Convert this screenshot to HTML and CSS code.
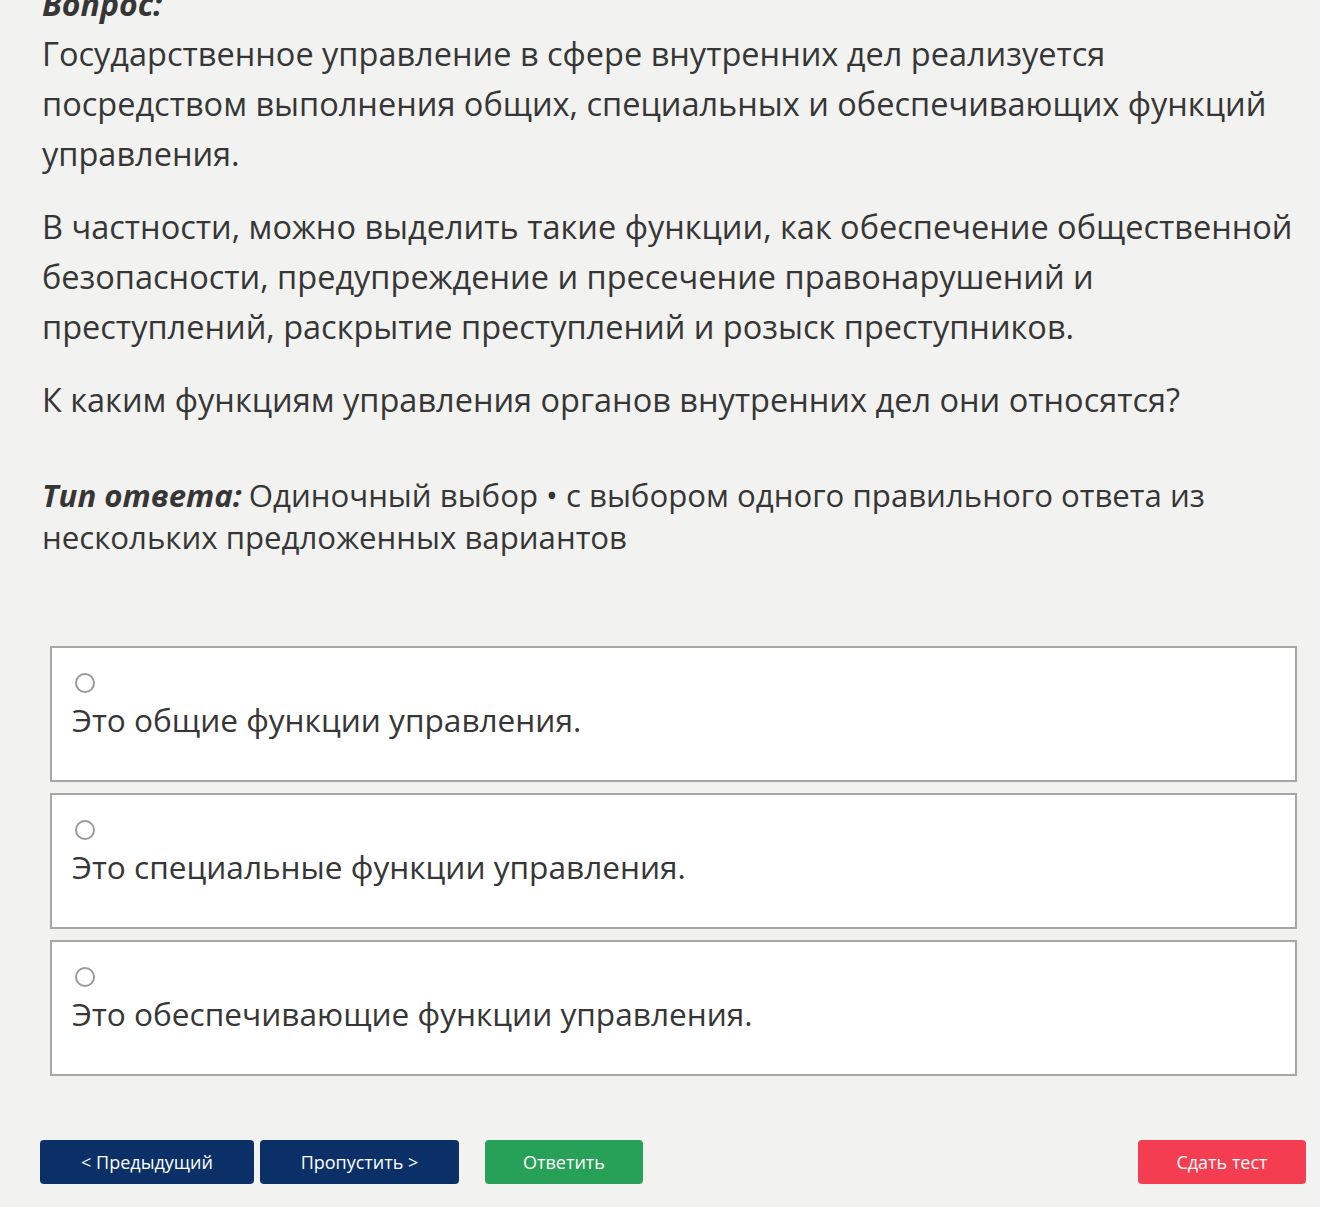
FILE: index.html
```html
<!DOCTYPE html>
<html lang="ru">
<head>
    <meta charset="UTF-8">
    <meta name="viewport" content="width=device-width, initial-scale=1.0">
    <title>Тестирование</title>
    <link rel="stylesheet" href="styles.css">
</head>
<body>
    <main class="test-page">
        <section class="question">
            <div class="question-label">Вопрос:</div>
            <p>Государственное управление в сфере внутренних дел реализуется посредством выполнения общих, специальных и обеспечивающих функций управления.</p>
            <p>В частности, можно выделить такие функции, как обеспечение общественной безопасности, предупреждение и пресечение правонарушений и преступлений, раскрытие преступлений и розыск преступников.</p>
            <p>К каким функциям управления органов внутренних дел они относятся?</p>
        </section>

        <div class="answer-type">
            <b>Тип ответа:</b><span>Одиночный выбор • с выбором одного правильного ответа из нескольких предложенных вариантов</span>
        </div>

        <form class="options">
            <label class="option">
                <input type="radio" name="answer">
                <span>Это общие функции управления.</span>
            </label>
            <label class="option">
                <input type="radio" name="answer">
                <span>Это специальные функции управления.</span>
            </label>
            <label class="option">
                <input type="radio" name="answer">
                <span>Это обеспечивающие функции управления.</span>
            </label>
        </form>

        <div class="controls">
            <button class="btn btn-nav btn-prev">&lt; Предыдущий</button>
            <button class="btn btn-nav btn-skip">Пропустить &gt;</button>
            <button class="btn btn-answer">Ответить</button>
            <button class="btn btn-finish">Сдать тест</button>
        </div>
    </main>
</body>
</html>
```

FILE: styles.css
```css
body {
    font-family: "Open Sans", "Noto Sans", sans-serif;
    margin: 0;
    padding: 0;
    background-color: #f2f2f0;
    color: #363636;
    overflow: hidden;
}

.test-page {
    margin-top: -21px;
    padding: 0 0 0 42px;
}

.question-label {
    font-size: 32px;
    line-height: 50px;
    font-weight: bold;
    font-style: italic;
}

.question p {
    font-size: 32.5px;
    line-height: 50px;
    margin: 0 0 23px;
    width: 1268px;
}

.answer-type {
    font-size: 31.2px;
    line-height: 42px;
    margin-top: 49px;
    width: 1240px;
}

.answer-type b {
    display: inline-block;
    font-style: italic;
    margin-right: 7px;
}

.options {
    margin: 88px 0 0 8px;
    width: 1247px;
    display: flex;
    flex-direction: column;
    gap: 11px;
}

.option {
    display: flex;
    flex-direction: column;
    align-items: flex-start;
    height: 136px;
    box-sizing: border-box;
    background-color: #ffffff;
    border: 2px solid #a6a6a6;
    padding: 25px 20px 0;
    font-size: 31.6px;
    line-height: 40px;
}

.option input {
    width: 20px;
    height: 20px;
    margin: 0 0 7px 3px;
    appearance: none;
    border: 2px solid #999999;
    border-radius: 50%;
    background: #ffffff;
}

.controls {
    display: flex;
    align-items: center;
    margin: 64px 14px 0 -2px;
}

.btn {
    height: 44px;
    border: none;
    border-radius: 4px;
    color: #ffffff;
    font-family: "Open Sans", sans-serif;
    font-size: 18px;
    padding: 0;
}

.btn-nav {
    background-color: #0b3068;
}

.btn-prev {
    width: 214px;
}

.btn-skip {
    width: 199px;
    margin-left: 6px;
}

.btn-answer {
    width: 158px;
    margin-left: 26px;
    background-color: #27a157;
}

.btn-finish {
    width: 168px;
    margin-left: auto;
    background-color: #f43d50;
}
```
